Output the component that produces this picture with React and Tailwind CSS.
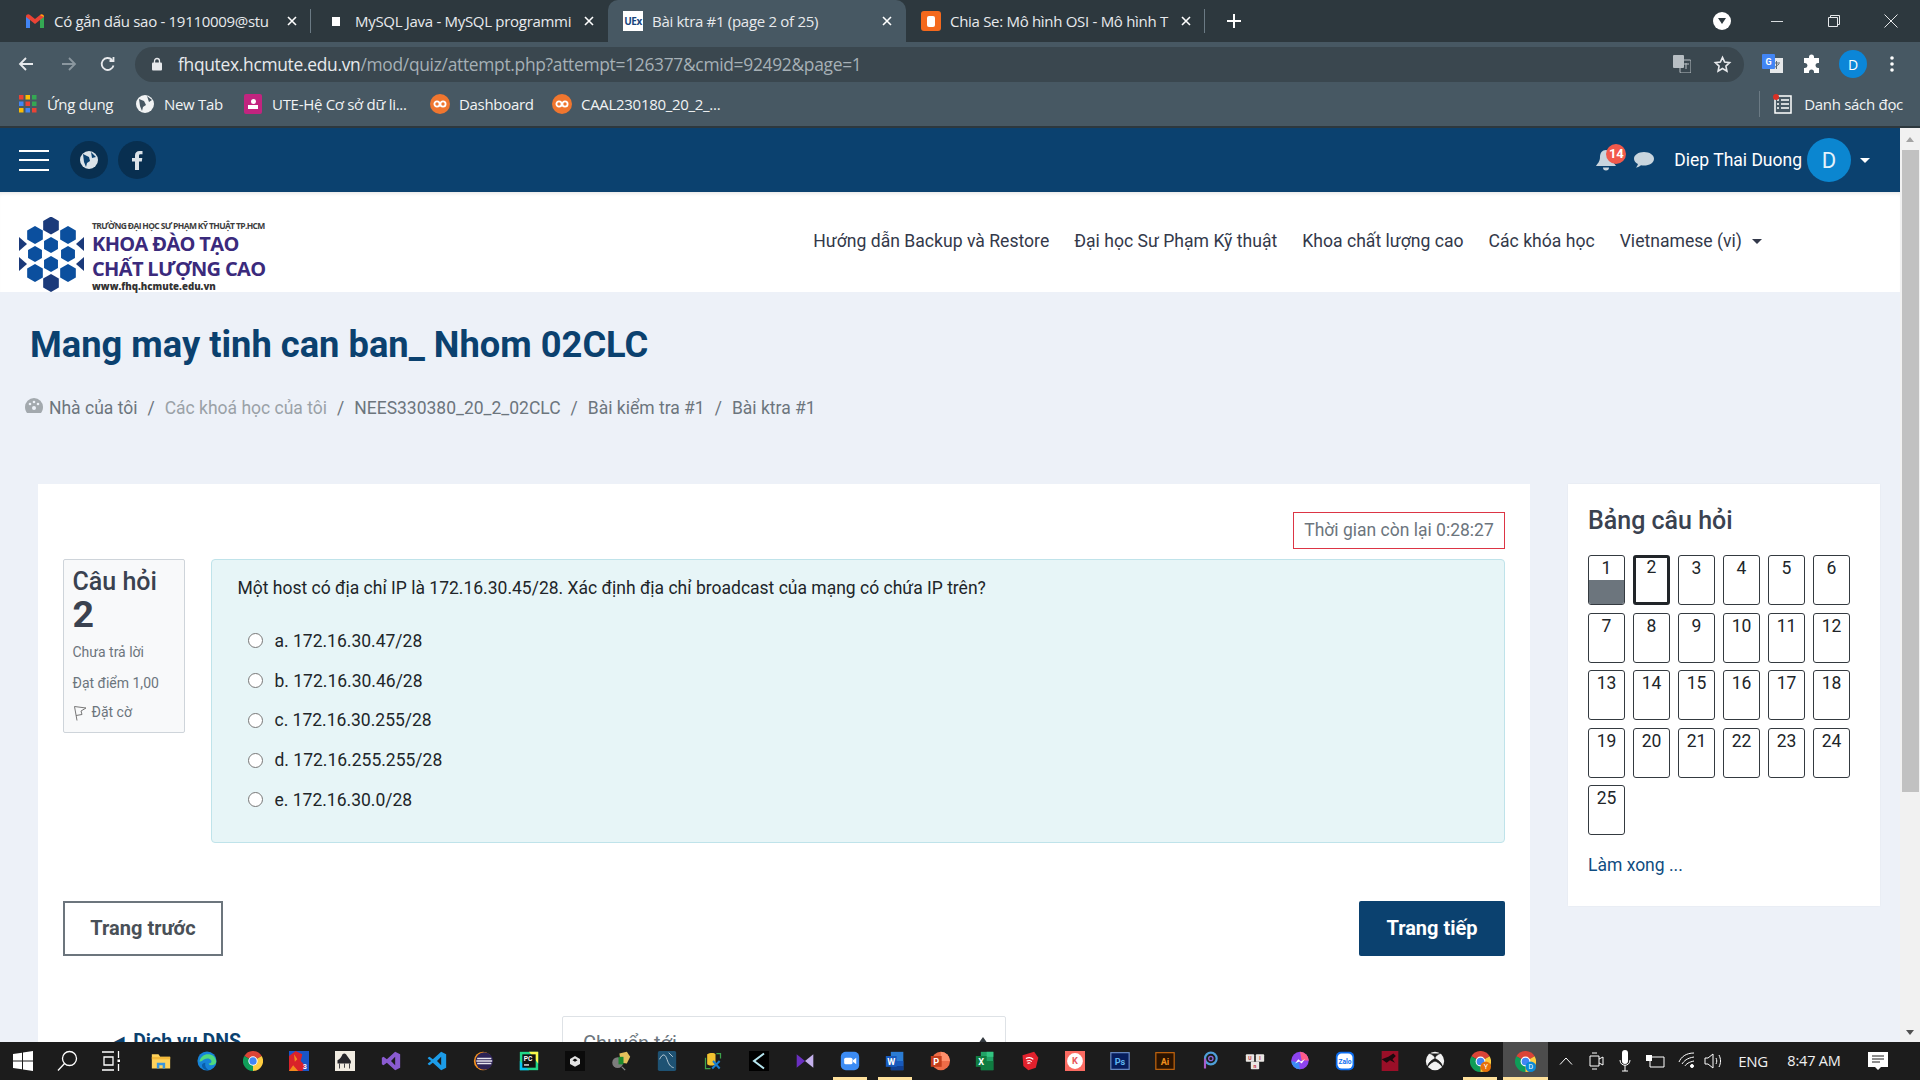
import React from "react";

const ChromeLogo = ({ size = 20, badge, badgeColor }) => (
  <svg width={size} height={size} viewBox="0 0 24 24">
    <path d="M12 12 L22.4 6 A12 12 0 0 0 1.6 6 Z" fill="#db4437" />
    <path d="M12 12 L1.6 6 A12 12 0 0 0 12 24 Z" fill="#0f9d58" />
    <path d="M12 12 L12 24 A12 12 0 0 0 22.4 6 Z" fill="#ffcd40" />
    <circle cx="12" cy="12" r="5.6" fill="#fff" />
    <circle cx="12" cy="12" r="4.4" fill="#4285f4" />
    {badge && <circle cx="18" cy="18" r="6" fill={badgeColor} />}
    {badge && <text x="18" y="21" fontSize="8" fill="#fff" textAnchor="middle" fontFamily="Roboto, sans-serif">{badge}</text>}
  </svg>
);

const S = ({ children, size = 20 }) => (
  <svg width={size} height={size} viewBox="0 0 24 24">{children}</svg>
);

const T = ({ x = 12, y = 16, s = 12, f = "#fff", w = 700, children }) => (
  <text x={x} y={y} fontSize={s} fill={f} fontWeight={w} textAnchor="middle" fontFamily="Roboto, sans-serif">{children}</text>
);

const taskIcons = [
  <S><path d="M1 4h8l2 3h12v14H1z" fill="#ffd35c" /><path d="M1 7h22v3H1z" fill="#f3b93a" /><path d="M7 14h10v7h-3v-4h-4v4H7z" fill="#3a96dd" /></S>,
  <S><circle cx="12" cy="12" r="11.5" fill="#1683d8" /><path d="M3 13c1-7 7-10 12-9 5 1 8 5 8 9 0 3-3 4-6 4-2 0-3-1-3-2 3 0 4-2 3-4-2-3-8-3-11 1z" fill="#4fd97f" /><path d="M6 17c0 4 4 6 8 6-3-2-5-5-4-9-2 0-4 1-4 3z" fill="#0b5ea8" /></S>,
  <ChromeLogo />,
  <S><rect width="24" height="24" fill="#1a55c8" /><path d="M0 24V6l8-6 8 4-2 8 6 6-4 6z" fill="#d9222a" /><path d="M0 24l5-7 6 7zM6 4l4 6-3 3z" fill="#f28a1d" /><T x="19" y="22" s="8" f="#fff">3</T></S>,
  <S><rect width="24" height="24" fill="#f1ece2" /><path d="M3 11c3-1 5-4 6-7 2-2 4-1 5 1l5 7v3H3z" fill="#26252a" /><path d="M5 15h1v6H5zM17 15h1v6h-1zM11 15h1v5h-1z" fill="#26252a" /></S>,
  <S><path d="M17 1l6 3v16l-6 3-10-9-4 3-2-1V8l2-1 4 3zM17 7l-5 5 5 5z" fill="#8a5bd0" /></S>,
  <S><path d="M17 1l6 3v16l-6 3-10-9-4 3-2-1v-1l4-3-4-3V8l2-1 4 3zM17 7l-5 5 5 5z" fill="#1c9ce8" /></S>,
  <S><circle cx="12" cy="12" r="11" fill="#f7941e" /><circle cx="13.5" cy="12" r="10.5" fill="#2c2255" /><path d="M5 8h17v2H5zM4 11h19v2H4zM5 14h17v2H5z" fill="#e8e6ef" /></S>,
  <S><path d="M1 1h22v22H1z" fill="#21d789" /><path d="M12 1h11v14z" fill="#fcf84a" /><path d="M1 12l11 11H1z" fill="#07c3f2" /><rect x="4" y="4" width="16" height="16" fill="#111" /><T x="11" y="12" s="8" f="#fff">PC</T><rect x="6" y="16" width="6" height="1.5" fill="#fff" /></S>,
  <S><rect width="24" height="24" fill="#0b0b0b" /><path d="M12 6l6 3.5v6L12 19l-6-3.5v-6zM12 9l-3 2 3 2 3-2z" fill="#e2e2e2" /></S>,
  <S><circle cx="8" cy="14" r="6.5" fill="#7c7c7c" /><path d="M10 3l9-2 4 6-4 8-7-1z" fill="#e5c05c" /><path d="M9 7h6v9H9z" fill="#1d8a2e" /><path d="M13 19l4 4" stroke="#888" strokeWidth="1.5" /></S>,
  <S><rect x="1" y="0" width="22" height="24" rx="2" fill="#1e5273" /><path d="M3 10c4-8 7-6 9 0s4 9 8 10M14 2l5 5" stroke="#d4dfe6" strokeWidth="1" fill="none" /></S>,
  <S><path d="M5 4c3-2 9-2 10 0v12c-2 2-8 2-10 0z" fill="#f2c230" /><path d="M3 8V21h6M16 3h5v6" stroke="#3da14a" strokeWidth="1.5" fill="none" /><path d="M11 21l9-9M12 12l8 9" stroke="#1a7fd1" strokeWidth="2.4" /></S>,
  <S><rect width="24" height="24" fill="#000" /><path d="M18 3L6 12l12 9" stroke="#b5e4ee" strokeWidth="2.4" fill="none" /></S>,
  <S><path d="M2 4l10 8-10 8z" fill="#6a2fc0" /><path d="M22 4L12 12l10 8z" fill="#c4b0ec" /></S>,
  <S><rect x="1" y="1" width="22" height="22" rx="6" fill="#3c8cf4" /><rect x="5" y="8" width="10" height="8" rx="2" fill="#fff" /><path d="M15.5 11l4-3v8l-4-3z" fill="#fff" /></S>,
  <S><path d="M7 1h15v22H7z" fill="#2b7cd3" /><path d="M7 12h15v6H7z" fill="#185abd" /><path d="M7 18h15v5H7z" fill="#103f91" /><rect x="1" y="6" width="13" height="13" fill="#185abd" /><T x="7.5" y="16.5" s="11">W</T></S>,
  <S><circle cx="13" cy="12" r="11" fill="#ed6c47" /><path d="M13 1a11 11 0 0 1 11 11H13z" fill="#ff8f6b" /><rect x="1" y="6" width="13" height="13" fill="#c43e1c" /><T x="7.5" y="16.5" s="11">P</T></S>,
  <S><path d="M7 1h15v22H7z" fill="#21a366" /><path d="M14 1h8v6h-8z" fill="#33c481" /><path d="M7 12h15v11H7z" fill="#107c41" /><rect x="1" y="6" width="13" height="13" fill="#107c41" /><T x="7.5" y="16.5" s="11">X</T></S>,
  <S><path d="M3 5l14-4 5 7-3 12-9 3-6-5z" fill="#e2212d" /><path d="M7 9c4-2 7-1 9 1M8 12c3-1 5-1 6 1M9 15c1-1 3-1 3 0" stroke="#fff" strokeWidth="1.4" fill="none" /></S>,
  <S><rect width="24" height="24" fill="#fb6b62" /><circle cx="12" cy="12" r="9.5" fill="#fff" /><T y="16" s="11" f="#e8555a">K</T></S>,
  <S><rect x="1" y="2" width="22" height="20" fill="#061d5c" stroke="#6c8fc9" strokeWidth="1.4" /><T y="16.5" s="11" f="#5fb5ef">Ps</T></S>,
  <S><rect x="1" y="2" width="22" height="20" fill="#2b1300" stroke="#c9680e" strokeWidth="1.4" /><T y="16.5" s="11" f="#f1901e">Ai</T></S>,
  <S><circle cx="13" cy="9" r="7" fill="none" stroke="#4e9fd9" strokeWidth="2.6" /><circle cx="13" cy="9" r="2.6" fill="none" stroke="#8f65d6" strokeWidth="1.6" /><path d="M6 9v12" stroke="#a85bc9" strokeWidth="2.6" /></S>,
  <S><rect x="1" y="4" width="10" height="9" rx="1" fill="#e9e6e2" /><rect x="13" y="4" width="10" height="9" rx="1" fill="#e9e6e2" /><rect x="7" y="13" width="10" height="9" rx="1" fill="#e9e6e2" /><T x="6" y="11" s="6" f="#c4283a">U</T><T x="18" y="11" s="6" f="#c4283a">I</T><T x="12" y="20" s="6" f="#c4283a">n</T></S>,
  <S><circle cx="12" cy="11.5" r="10.5" fill="#8d44ef" /><path d="M12 1a10.5 10.5 0 0 1 10.5 10.5H14z" fill="#ff5c87" /><path d="M1.5 12A10.5 10.5 0 0 0 12 22l-1-8z" fill="#3c8cf4" /><path d="M6 15l4-5 3 2.500 5-3-4 5.500-3-2.500z" fill="#fff" /></S>,
  <S><rect x="1" y="1" width="22" height="22" rx="6" fill="#0d6ef0" /><rect x="3" y="3" width="18" height="18" rx="5" fill="#fff" /><T y="15" s="8" f="#0d6ef0">Zalo</T></S>,
  <S><rect x="2" width="20" height="24" fill="#9a0f28" /><path d="M2 10l8-3 6-4 3 3-4 4 3 4-6-3-4 3z" fill="#1a0a0e" /></S>,
  <S><circle cx="12" cy="12" r="11" fill="#f2f2f2" /><path d="M6 3c3 1 5 3 6 5 1-2 3-4 6-5M3 19c1-5 5-8 9-10 4 2 8 5 9 10-3-4-6-6-9-7-3 1-6 3-9 7z" fill="#1c1c1c" stroke="#1c1c1c" strokeWidth="1" /></S>,
];

const TaskSlot = ({ children, mark, active, wide }) => (
  <div className={`relative flex h-full items-center justify-center ${wide ? "w-[46px]" : "w-[45px]"} ${active ? "bg-[#4d4d4d]" : ""}`}>
    {children}
    {mark && <div className={`absolute bottom-0 h-[3px] bg-[#ffe19c] ${active ? "inset-x-0" : "inset-x-[5.5px]"}`} />}
  </div>
);

const Taskbar = () => (
  <div className="flex h-[38px] shrink-0 items-center bg-[#1c1c1c] font-['Open_Sans',sans-serif] text-white">
    <div className="flex w-[45px] justify-center">
      <svg width="20" height="20" viewBox="0 0 20 20" fill="#fff"><path d="M0 3l9-1.300V9.500H0zM10 1.500L20 0v9.500H10zM0 10.500h9v7.800L0 17zM10 10.500h10V20l-10-1.500z" /></svg>
    </div>
    <div className="flex w-[44px] justify-center">
      <svg width="22" height="22" viewBox="0 0 22 22" fill="none" stroke="#fff" strokeWidth="1.300"><circle cx="13.500" cy="8.500" r="7" /><path d="M8.500 13.500L2 20.500" /></svg>
    </div>
    <div className="flex w-[44px] justify-center">
      <svg width="20" height="20" viewBox="0 0 20 20" fill="none" stroke="#fff" strokeWidth="1.300"><path d="M1 1h12M1 19h12M3 6h9v8H3zM17.500 0v7M17.500 13v7" /><rect x="16.500" y="8.500" width="2.500" height="2.500" fill="#fff" stroke="none" /></svg>
    </div>
    <div className="ml-[4.5px] flex h-full">
      {taskIcons.map((icon, i) => (
        <TaskSlot key={i} wide={i < 15} mark={i === 15 || i === 16}>{icon}</TaskSlot>
      ))}
      <TaskSlot mark><ChromeLogo size={21} badge="Y" badgeColor="#e8710a" /></TaskSlot>
      <TaskSlot mark active><ChromeLogo size={21} badge="D" badgeColor="#0b8ad6" /></TaskSlot>
    </div>
    <div className="ml-auto flex h-full items-center">
      <svg className="mr-[15px]" width="14" height="8" viewBox="0 0 14 8" fill="none" stroke="#fff" strokeWidth="1"><path d="M1 7.500L7 1l6 6.500" /></svg>
      <svg className="mr-[15px]" width="16" height="20" viewBox="0 0 16 20" fill="none" stroke="#fff" strokeWidth="1"><path d="M2 5h9v10H2zM11 8l4-2v8l-4-2M4 2h5M4 18h5" /></svg>
      <svg className="mr-[14px]" width="12" height="22" viewBox="0 0 12 22" fill="#fff"><rect x="3" y="0" width="6" height="14" rx="3" /><path d="M1 10c0 7 10 7 10 0M6 15v6M3 21h6" stroke="#fff" fill="none" /></svg>
      <svg className="mr-[13px]" width="20" height="16" viewBox="0 0 20 16" fill="none" stroke="#fff" strokeWidth="1"><path d="M5 4h14v10H5z" /><rect x="1" y="2" width="6" height="6" fill="#fff" stroke="none" /></svg>
      <svg className="mr-[8px]" width="18" height="18" viewBox="0 0 18 18" fill="none" stroke="#fff" strokeWidth="1"><path d="M1 10C3 5 8 1 16 1M4 12c2-3 5-6 12-7M7 14c1-2 4-4 9-5" /><circle cx="14" cy="14" r="1.500" fill="#fff" /></svg>
      <svg className="mr-[9px]" width="20" height="20" viewBox="0 0 20 20" fill="none" stroke="#fff" strokeWidth="1"><path d="M1 7h3l5-4v14l-5-4H1zM12 7c1 2 1 4 0 6M15 4c2 4 2 8 0 12" /></svg>
      <span className="w-[40px] text-center text-[15px] leading-none tracking-[-0.3px] text-[#f0f0f0]">ENG</span>
      <span className="ml-[6px] w-[70px] text-center text-[14.5px] leading-none whitespace-nowrap tracking-[-0.2px] text-[#f0f0f0]">8:47 AM</span>
      <svg className="ml-[19px] mr-[32px]" width="20" height="20" viewBox="0 0 20 20"><path d="M0 1h20v15h-7l-3 3-3-3H0z" fill="#fff" /><path d="M4 5h12M4 8h12M4 11h8" stroke="#1c1c1c" /></svg>
    </div>
  </div>
);

const GmailIcon = () => (
  <svg width="18" height="14" viewBox="0 0 18 14">
    <path d="M0 2.500V14h4V6l5 4 5-4v8h4V2.500C18 .500 15.500 -.500 14 1L9 5 4 1C2.500 -.500 0 .500 0 2.500z" fill="#ea4335" />
    <path d="M0 3v11h4V6z" fill="#4285f4" />
    <path d="M14 6v8h4V3z" fill="#34a853" />
    <path d="M14 1l4 2c0-2-2.500-3.500-4-2z" fill="#fbbc04" />
  </svg>
);

const Tab = ({ icon, title, active, divider, width }) => (
  <div className={`relative flex h-[42px] shrink-0 items-center ${width} ${active ? "rounded-t-[10px] bg-[#475863]" : ""}`}>
    <div className="ml-[14px] flex w-[22px] shrink-0 justify-center">{icon}</div>
    <span className="ml-[8px] flex-1 overflow-hidden whitespace-nowrap text-[15px] text-[#e8eaed]">{title}</span>
    <svg className="mr-[14px] ml-[11px] shrink-0" width="10" height="10" viewBox="0 0 10 10" stroke="#fff" strokeWidth="1.600"><path d="M1 1l8 8M9 1L1 9" /></svg>
    {divider && <div className="absolute top-[9px] right-0 h-[24px] w-px bg-[#6b7a84]" />}
  </div>
);

const TabBar = () => (
  <div className="flex h-[42px] items-center bg-[#2d383e] pl-[10px]">
    <Tab width="w-[301px]" divider icon={<GmailIcon />} title="Có gắn dấu sao - 19110009@stu" />
    <Tab width="w-[297px]" icon={<div className="h-[9px] w-[8px] bg-white" />} title="MySQL Java - MySQL programmi" />
    <Tab width="w-[298px]" active icon={<div className="flex h-[20px] w-[20px] items-center justify-center bg-white text-[10px] font-bold tracking-tighter text-[#17457e]">UEx</div>} title="Bài ktra #1 (page 2 of 25)" />
    <Tab width="w-[299px]" divider icon={<div className="flex h-[20px] w-[20px] items-center justify-center rounded-[3px] bg-[#f4691d]"><div className="h-[11px] w-[8px] rounded-[2px] bg-white" /></div>} title="Chia Se: Mô hình OSI - Mô hình T" />
    <svg className="ml-[21px]" width="16" height="16" viewBox="0 0 16 16" stroke="#fff" strokeWidth="2"><path d="M8 1v14M1 8h14" /></svg>
    <div className="ml-auto flex items-center">
      <div className="flex h-[18px] w-[18px] items-center justify-center rounded-full bg-white">
        <div className="h-0 w-0 border-x-[4px] border-t-[6px] border-x-transparent border-t-[#2d383e]" />
      </div>
      <div className="ml-[40px] h-px w-[12px] bg-[#d8dcdf]" />
      <svg className="ml-[44px]" width="14" height="14" viewBox="0 0 14 14" fill="none" stroke="#e6e8ea"><path d="M1.500 3.500h9v9h-9zM3.500 3.500v-2h9v9h-2" /></svg>
      <svg className="mr-[22px] ml-[43px]" width="14" height="14" viewBox="0 0 14 14" stroke="#e6e8ea"><path d="M.500.500l13 13M13.500.500l-13 13" /></svg>
    </div>
  </div>
);

const ToolBar = () => (
  <div className="flex h-[44px] items-center bg-[#475863]">
    <svg className="ml-[18px]" width="16" height="16" viewBox="0 0 16 16" fill="none" stroke="#e8eaed" strokeWidth="1.800"><path d="M15 8H2M8 2L2 8l6 6" /></svg>
    <svg className="ml-[27px]" width="16" height="16" viewBox="0 0 16 16" fill="none" stroke="#8b979f" strokeWidth="1.800"><path d="M1 8h13M8 2l6 6-6 6" /></svg>
    <svg className="ml-[23px]" width="16" height="16" viewBox="0 0 16 16" fill="none" stroke="#e8eaed" strokeWidth="1.800"><path d="M13.500 9.500A6 6 0 1 1 12 3.800M13.500 1v4h-4" /></svg>
    <div className="ml-[19px] flex h-[35px] w-[1609px] items-center rounded-full bg-[#3a474f] pl-[17px]">
      <svg width="10" height="14" viewBox="0 0 10 14"><path d="M2.500 6V4a2.500 2.500 0 0 1 5 0v2" fill="none" stroke="#e8eaed" strokeWidth="1.300" /><rect y="5.500" width="10" height="8" rx="1" fill="#e8eaed" /></svg>
      <span className="ml-[16px] text-[17.4px] whitespace-nowrap text-[#e8eaed]">fhqutex.hcmute.edu.vn<span className="text-[#a6b0b6]">/mod/quiz/attempt.php?attempt=126377&amp;cmid=92492&amp;page=1</span></span>
      <div className="ml-auto flex items-center">
        <svg width="18" height="18" viewBox="0 0 18 18"><rect width="11" height="13" rx="1" fill="#b7bec3" /><rect x="7" y="5" width="11" height="13" rx="1" fill="none" stroke="#b7bec3" /><path d="M10 9h6M13 8v6" stroke="#b7bec3" /></svg>
        <svg className="mr-[12px] ml-[22px]" width="19" height="19" viewBox="0 0 24 24" fill="none" stroke="#e8eaed" strokeWidth="2"><path d="M12 3l2.700 6 6.300.700-4.700 4.300 1.300 6.500L12 17l-5.600 3.500 1.300-6.500L3 9.700 9.300 9z" /></svg>
      </div>
    </div>
    <svg className="ml-[18px]" width="22" height="20" viewBox="0 0 22 20"><rect x="8" y="4" width="13" height="15" fill="#e6e8ea" /><path d="M11 9h7M14.500 7v8M12 14l5-4" stroke="#5f6b73" /><rect x="0" y="0" width="13" height="15" rx="1" fill="#4285f4" /><text x="6.500" y="11" fontSize="9" fontWeight="700" fill="#fff" textAnchor="middle" fontFamily="Roboto, sans-serif">G</text></svg>
    <svg className="ml-[18px]" width="20" height="20" viewBox="0 0 20 20" fill="#fff"><path d="M7 3a2.500 2.500 0 0 1 5 0v1h5v5h-1a2.500 2.500 0 0 0 0 5h1v5h-5v-1a2.500 2.500 0 0 0-5 0v1H2v-5h1a2.500 2.500 0 0 0 0-5H2V4h5z" /></svg>
    <div className="ml-[17px] flex h-[28px] w-[28px] items-center justify-center rounded-full bg-[#0b86d8] text-[14px] text-white">D</div>
    <svg className="ml-[23px]" width="4" height="18" viewBox="0 0 4 18" fill="#fff"><circle cx="2" cy="3" r="1.800" /><circle cx="2" cy="9" r="1.800" /><circle cx="2" cy="15" r="1.800" /></svg>
  </div>
);

const Bookmark = ({ icon, label, w }) => (
  <div className={`flex items-center ${w}`}>
    <div className="flex w-[20px] justify-center">{icon}</div>
    <span className="ml-[9px] text-[15px] whitespace-nowrap text-[#f1f3f4]">{label}</span>
  </div>
);

const Moodle = () => (
  <div className="flex h-[20px] w-[20px] items-center justify-center rounded-full bg-[#f0762f]">
    <svg width="14" height="8" viewBox="0 0 14 8" fill="none" stroke="#fff" strokeWidth="1.800"><circle cx="4" cy="4" r="2.600" /><circle cx="10" cy="4" r="2.600" /></svg>
  </div>
);

const BookmarkBar = () => (
  <div className="flex h-[42px] items-center border-b-2 border-[#2d383e] bg-[#475863] pb-[4px] pl-[18px]">
    <Bookmark w="w-[117px]" label="Ứng dụng" icon={
      <svg width="18" height="18" viewBox="0 0 18 18">
        {[0, 6.500, 13].map((y, r) => [0, 6.500, 13].map((x, c) => (
          <rect key={`${r}${c}`} x={x} y={y} width="4.500" height="4.500" fill={["#ea4335", "#fbbc04", "#34a853", "#4285f4", "#ea4335", "#34a853", "#fbbc04", "#4285f4", "#ea4335"][r * 3 + c]} />
        )))}
      </svg>
    } />
    <Bookmark w="w-[108px]" label="New Tab" icon={
      <svg width="18" height="18" viewBox="0 0 18 18"><circle cx="9" cy="9" r="9" fill="#f1f3f4" /><path d="M3 4l5 2 2 4-3 2-1 4-2-5zM11 1l5 4-3 2z" fill="#475863" /></svg>
    } />
    <Bookmark w="w-[187px]" label="UTE-Hệ Cơ sở dữ li..." icon={
      <div className="flex h-[20px] w-[18px] flex-col items-center justify-center rounded-[2px] bg-[#c2247f]"><div className="h-[5px] w-[5px] rounded-full bg-white" /><div className="mt-[1px] h-[4px] w-[10px] bg-white" /></div>
    } />
    <Bookmark w="w-[122px]" label="Dashboard" icon={<Moodle />} />
    <Bookmark w="w-[166px]" label="CAAL230180_20_2_..." icon={<Moodle />} />
    <div className="ml-auto flex items-center pr-[17px]">
      <div className="h-[26px] w-px bg-[#6b7a84]" />
      <svg className="ml-[13px]" width="20" height="20" viewBox="0 0 20 20"><rect x="2" y="2" width="16" height="17" fill="none" stroke="#fff" strokeWidth="1.500" /><path d="M8 6h8M8 10h8M8 14h8M4 6h2M4 10h2M4 14h2" stroke="#fff" strokeWidth="1.500" /><circle cx="3" cy="3" r="3" fill="#d93025" /></svg>
      <span className="ml-[11px] text-[15px] whitespace-nowrap text-[#f1f3f4]">Danh sách đọc</span>
    </div>
  </div>
);

const Header = () => (
  <div className="flex h-[64px] shrink-0 items-center bg-[#0b416f] pl-[19px]">
    <div className="flex h-[21px] w-[30px] flex-col justify-between">
      <div className="h-[2px] bg-white" /><div className="h-[2px] bg-white" /><div className="h-[2px] bg-white" />
    </div>
    <div className="ml-[21px] flex h-[38px] w-[38px] items-center justify-center rounded-full bg-[#082f50]">
      <svg width="18" height="18" viewBox="0 0 18 18"><circle cx="9" cy="9" r="9" fill="#dbe3e9" /><path d="M3 3l6 3 1 4-3 2-1 4-2-5zM11 1l5 5-4 1z" fill="#0b416f" /></svg>
    </div>
    <div className="ml-[10px] flex h-[38px] w-[38px] items-center justify-center rounded-full bg-[#082f50]">
      <svg width="11" height="19" viewBox="0 0 11 19" fill="#dbe3e9"><path d="M3 19V10.500H0V7h3V4.500C3 1.500 4.800 0 7.500 0H10.500v3.300H8.500C7.300 3.300 7 3.900 7 4.800V7h3.300l-.500 3.500H7V19z" /></svg>
    </div>
    <div className="ml-auto flex items-center pr-[30px]">
      <div className="relative h-[22px] w-[22px]">
        <svg width="22" height="22" viewBox="0 0 22 22" fill="#c9d5de"><path d="M11 1c4 0 6 3 6 7 0 5 3 7 4 9H1c1-2 4-4 4-9 0-4 2-7 6-7zM8 18.500h6a3 3 0 0 1-6 0z" /></svg>
        <div className="absolute top-[-5px] left-[11px] flex h-[20px] w-[20px] items-center justify-center rounded-full bg-[#f2594b] text-[13px] font-bold text-white">14</div>
      </div>
      <svg className="ml-[16px]" width="22" height="20" viewBox="0 0 22 20" fill="#c9d5de"><path d="M11 2c5.500 0 10 2.800 10 6.800s-4.500 6.800-10 6.800c-1 0-2-.100-3-.300-1.300 1.200-3 2.200-5 2.400 1-1.200 1.700-2.300 1.900-3.600C2.500 12.800 1 11 1 8.800 1 4.800 5.500 2 11 2z" /></svg>
      <span className="ml-[19px] text-[17.5px] whitespace-nowrap text-white">Diep Thai Duong</span>
      <div className="ml-[5px] flex h-[44px] w-[44px] items-center justify-center rounded-full bg-[#0b86d0] text-[22px] text-[#e3f2fb]">D</div>
      <div className="ml-[9px] h-0 w-0 border-x-[5px] border-t-[5px] border-x-transparent border-t-white" />
    </div>
  </div>
);

const hexes = [
  [32, 8.5, 9, "#1b3a7a"], [16, 18, 9, "#0b4f9e"], [49, 18, 9, "#0b4f9e"],
  [32, 28, 8, "#0b4f9e"], [16, 37, 8, "#0b4f9e"], [49, 37, 8, "#0b4f9e"],
  [32, 47, 8, "#0b4f9e"], [16, 56, 9, "#0b4f9e"], [49, 56, 9, "#0b4f9e"],
  [32, 66, 9, "#1b3a7a"],
];

const HexLogo = () => (
  <svg width="66" height="75" viewBox="0 0 66 75">
    {hexes.map(([x, y, r, c], i) => (
      <polygon key={i} fill={c} points={`${x},${y - r} ${x + r * 0.87},${y - r / 2} ${x + r * 0.87},${y + r / 2} ${x},${y + r} ${x - r * 0.87},${y + r / 2} ${x - r * 0.87},${y - r / 2}`} />
    ))}
    <polygon points="0,20 8,27 0,34" fill="#1b3a7a" />
    <polygon points="65,20 57,27 65,34" fill="#1b3a7a" />
    <polygon points="0,40 8,47 0,54" fill="#1b3a7a" />
    <polygon points="65,40 57,47 65,54" fill="#1b3a7a" />
  </svg>
);

const NavBar = () => (
  <div className="flex h-[100px] shrink-0 bg-white pl-[19px] shadow-[inset_0_4px_4px_-3px_rgba(0,0,0,0.12)]">
    <div className="mt-[25px] flex">
      <HexLogo />
      <div className="ml-[7px] flex flex-col font-['Open_Sans',sans-serif] whitespace-nowrap">
        <span className="mt-[3px] text-[8.5px] leading-[12px] font-bold tracking-[-0.65px] text-[#3d3d3d]">TRƯỜNG ĐẠI HỌC SƯ PHẠM KỸ THUẬT TP.HCM</span>
        <span className="mt-[-1px] text-[20px] leading-[26px] font-bold tracking-[-0.65px] text-[#3b2a7c]">KHOA ĐÀO TẠO</span>
        <span className="mt-[-1px] text-[20px] leading-[26px] font-bold tracking-[-0.65px] text-[#3b2a7c]">CHẤT LƯỢNG CAO</span>
        <span className="text-[9.7px] leading-[10px] font-extrabold text-[#333]">www.fhq.hcmute.edu.vn</span>
      </div>
    </div>
    <div className="ml-auto flex items-center pr-[138px] pb-[2px] text-[17.6px] text-[#33394a]">
      <span>Hướng dẫn Backup và Restore</span>
      <span className="ml-[25px]">Đại học Sư Phạm Kỹ thuật</span>
      <span className="ml-[25px]">Khoa chất lượng cao</span>
      <span className="ml-[25px]">Các khóa học</span>
      <span className="ml-[25px]">Vietnamese (vi)</span>
      <div className="ml-[10px] h-0 w-0 border-x-[5px] border-t-[5px] border-x-transparent border-t-[#33394a]" />
    </div>
  </div>
);

const Crumb = ({ c = "text-[#6c757d]", children }) => <span className={c}>{children}</span>;
const Sep = () => <span className="mx-[10px] text-[#6c757d]">/</span>;

const options = ["a. 172.16.30.47/28", "b. 172.16.30.46/28", "c. 172.16.30.255/28", "d. 172.16.255.255/28", "e. 172.16.30.0/28"];

const QuizCard = () => (
  <div className="h-[600px] w-[1492px] shrink-0 bg-white pt-[28px] pr-[25px] pl-[25px]">
    <div className="flex justify-end">
      <div className="flex h-[37px] w-[212px] items-center justify-center border border-[#dc3545] text-[17.5px] text-[#6c757d]">Thời gian còn lại 0:28:27</div>
    </div>
    <div className="mt-[10px] flex items-start">
      <div className="h-[174px] w-[122px] shrink-0 rounded-[2px] border border-[#ced4da] bg-[#f8f9fa] pl-[8.5px]">
        <div className="mt-[6px] text-[25px] leading-[32px] font-medium text-[#3a4250]">Câu hỏi</div>
        <div className="mt-[-3px] text-[37.5px] leading-[38px] font-bold text-[#3a4250]">2</div>
        <div className="mt-[11px] text-[14px] leading-[17px] text-[#6c757d]">Chưa trả lời</div>
        <div className="mt-[14px] text-[14px] leading-[17px] text-[#6c757d]">Đạt điểm 1,00</div>
        <div className="mt-[12px] flex items-center text-[14px] leading-[17px] text-[#6c757d]">
          <svg width="14" height="16" viewBox="0 0 14 16" fill="none" stroke="#777" strokeWidth="1"><path d="M1.500 1.500l2.500 14M1.500 1.500l11.500 1.500-5 3 1 3.500-6 1" /></svg>
          <span className="ml-[5px]">Đặt cờ</span>
        </div>
      </div>
      <div className="ml-[26px] h-[284px] flex-1 rounded-[4px] border border-[#bfe3ea] bg-[#e7f5f7] pt-[15px] pl-[25.5px]">
        <div className="text-[17.5px] leading-[26px] text-[#212529]">Một host có địa chỉ IP là 172.16.30.45/28. Xác định địa chỉ broadcast của mạng có chứa IP trên?</div>
        <div className="mt-[20px] flex flex-col pl-[10px]">
          {options.map((o) => (
            <div key={o} className="flex h-[39.75px] items-center">
              <div className="h-[15px] w-[15px] rounded-full border-[1.5px] border-[#777] bg-white" />
              <span className="ml-[12px] text-[17.5px] text-[#212529]">{o}</span>
            </div>
          ))}
        </div>
      </div>
    </div>
    <div className="mt-[58px] flex justify-between">
      <div className="flex h-[55px] w-[160px] items-center justify-center border-2 border-[#6c757d] pb-[2px] text-[20px] font-bold text-[#495057]">Trang trước</div>
      <div className="flex h-[55px] w-[146px] items-center justify-center rounded-[2px] bg-[#0b416f] pb-[1px] text-[20px] font-bold text-white">Trang tiếp</div>
    </div>
    <div className="mt-[60px] flex items-start">
      <div className="mt-[11px] w-[499px] shrink-0 pl-[46px] text-[19.5px] font-bold whitespace-nowrap text-[#0b416f]">◄ Dịch vụ DNS</div>
      <div className="flex h-[60px] w-[444px] items-start justify-between rounded-[2px] border border-[#dee2e6] pt-[11px] pr-[17px] pl-[20px] text-[20px] text-[#6c757d]">
        <span>Chuyển tới</span>
        <div className="mt-[9px] h-0 w-0 border-x-[5px] border-b-[7px] border-x-transparent border-b-[#343a40]" />
      </div>
    </div>
  </div>
);

const NavCell = ({ n }) => (
  <div className={`relative h-[50px] w-[37px] overflow-hidden rounded-[3px] text-center text-[17.5px] text-[#212529] ${n === 2 ? "border-[3px] border-[#212529] leading-[19px]" : "border border-[#343a40] leading-[24px]"}`}>
    {n}
    {n === 1 && <div className="absolute inset-x-0 bottom-0 h-[24px] bg-[#6c757d]" />}
  </div>
);

const Sidebar = () => (
  <div className="h-[422px] w-[312px] shrink-0 bg-white pt-[21px] pl-[20px] shadow-[0_0_2px_rgba(0,0,0,0.05)]">
    <div className="text-[25px] leading-[32px] font-medium text-[#3a4250]">Bảng câu hỏi</div>
    <div className="mt-[18px] grid w-[262px] grid-cols-6 gap-x-[8px] gap-y-[7.5px]">
      {Array.from({ length: 25 }, (_, i) => <NavCell key={i} n={i + 1} />)}
    </div>
    <div className="mt-[17px] text-[17.5px] leading-[26px] text-[#0f4c81]">Làm xong ...</div>
  </div>
);

const Page = () => (
  <div className="min-w-0 flex-1 overflow-hidden bg-[#edf1f8]">
    <NavBar />
    <div className="pt-[32px] pl-[30px] text-[36.3px] leading-[42px] font-bold whitespace-nowrap text-[#0b416f]">Mang may tinh can ban_ Nhom 02CLC</div>
    <div className="mt-[29px] flex h-[26px] items-center pl-[25px] text-[17.5px] whitespace-nowrap">
      <svg className="mr-[6px] mb-[6px]" width="18" height="15" viewBox="0 0 18 15" fill="#a3a9ae"><path d="M9 0a9 9 0 0 1 9 9c0 2-.500 4-2 6H2C.500 13 0 11 0 9a9 9 0 0 1 9-9z" /><circle cx="5" cy="6" r="1.300" fill="#edf1f8" /><circle cx="9" cy="4" r="1.300" fill="#edf1f8" /><circle cx="13" cy="6" r="1.300" fill="#edf1f8" /><circle cx="9" cy="10" r="2" fill="#edf1f8" /></svg>
      <Crumb>Nhà của tôi</Crumb><Sep />
      <Crumb c="text-[#9aa1a7]">Các khoá học của tôi</Crumb><Sep />
      <Crumb>NEES330380_20_2_02CLC</Crumb><Sep />
      <Crumb>Bài kiểm tra #1</Crumb><Sep />
      <Crumb>Bài ktra #1</Crumb>
    </div>
    <div className="mt-[63px] flex items-start pl-[38px]">
      <QuizCard />
      <div className="ml-[38px]"><Sidebar /></div>
    </div>
  </div>
);

const Scrollbar = () => (
  <div className="flex w-[20px] shrink-0 flex-col items-center bg-[#f1f1f1]">
    <div className="flex h-[22px] items-center justify-center">
      <div className="h-0 w-0 border-x-[4px] border-b-[5px] border-x-transparent border-b-[#a3a3a3]" />
    </div>
    <div className="h-[642px] w-[17px] bg-[#c1c1c1]" />
    <div className="mt-auto flex h-[19px] items-center justify-center">
      <div className="h-0 w-0 border-x-[4px] border-t-[5px] border-x-transparent border-t-[#505050]" />
    </div>
  </div>
);

export default function App() {
  return (
    <div className="flex h-screen w-full flex-col overflow-hidden font-['Roboto',sans-serif]">
      <div className="shrink-0 font-['Open_Sans',sans-serif] tracking-[-0.3px]">
        <TabBar />
        <ToolBar />
        <BookmarkBar />
      </div>
      <div className="flex min-h-0 flex-1">
        <div className="flex min-w-0 flex-1 flex-col overflow-hidden">
          <Header />
          <Page />
        </div>
        <Scrollbar />
      </div>
      <Taskbar />
    </div>
  );
}
